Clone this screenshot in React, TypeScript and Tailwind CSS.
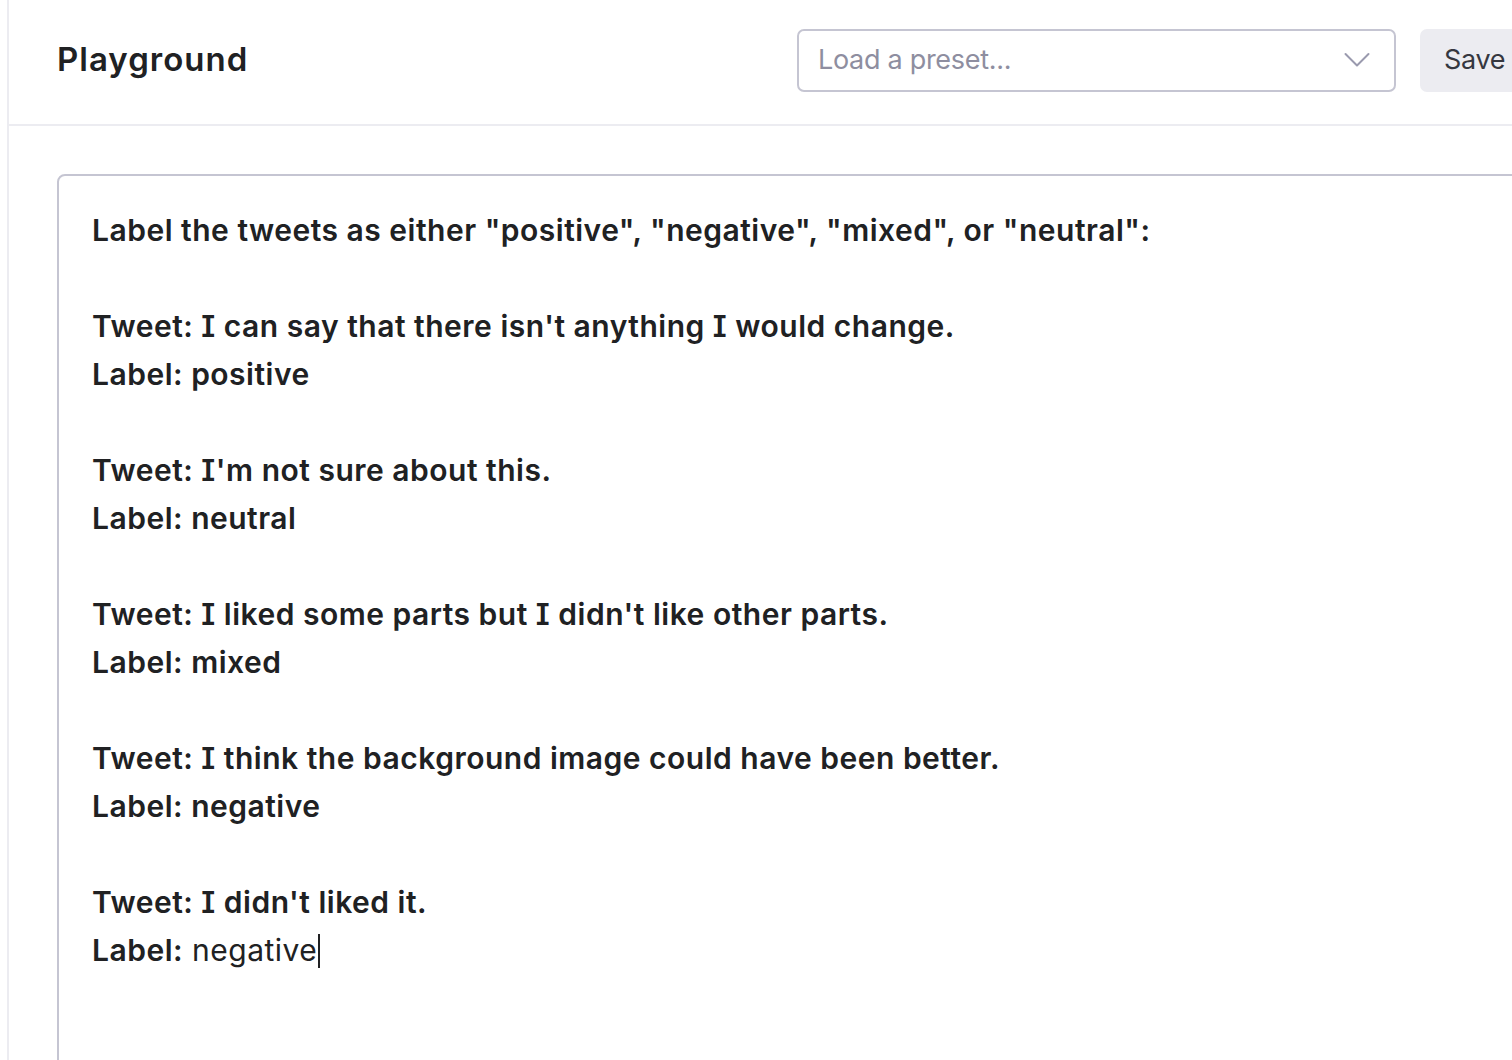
import React from "react";

const lines: { b: string; r?: string; caret?: boolean }[] = [
  { b: 'Label the tweets as either "positive", "negative", "mixed", or "neutral":' },
  { b: "" },
  { b: "Tweet: I can say that there isn't anything I would change." },
  { b: "Label: positive" },
  { b: "" },
  { b: "Tweet: I'm not sure about this." },
  { b: "Label: neutral" },
  { b: "" },
  { b: "Tweet: I liked some parts but I didn't like other parts." },
  { b: "Label: mixed" },
  { b: "" },
  { b: "Tweet: I think the background image could have been better." },
  { b: "Label: negative" },
  { b: "" },
  { b: "Tweet: I didn't liked it." },
  { b: "Label:", r: " negative", caret: true },
];

export default function App() {
  return (
    <div
      className="flex h-[1060px] w-[1512px] overflow-hidden bg-white text-[#202123] [font-feature-settings:'cv08']"
      style={{ fontFamily: "Inter, 'Noto Sans', sans-serif" }}
    >
      <div className="w-[9px] shrink-0 border-r-2 border-[#ececf1]" />
      <div className="flex min-w-0 flex-1 flex-col">
        <header className="flex h-[126px] shrink-0 items-center border-b-2 border-[#ececf1] pb-[4px] pl-[48px]">
          <div className="w-[740px] shrink-0">
            <h1 className="text-[33px] font-semibold tracking-[1px] text-[#202123]">Playground</h1>
          </div>
          <div className="flex h-[63px] w-[599px] shrink-0 items-center justify-between rounded-[7px] border-2 border-[#c5c5d2] pl-[19px] pr-[24px]">
            <span className="text-[27px] text-[#8e8ea0] tracking-[-0.3px]">Load a preset...</span>
            <svg width="26" height="16" viewBox="0 0 26 16" fill="none">
              <path d="M1.5 2 L13 13.5 L24.5 2" stroke="#9a9aae" strokeWidth="2" strokeLinecap="round" strokeLinejoin="round" />
            </svg>
          </div>
          <div className="ml-[24px] flex h-[63px] w-[120px] shrink-0 items-center rounded-[7px] bg-[#ececf1] pl-[24px]">
            <span className="text-[27px] text-[#353740] tracking-[-0.3px]">Save</span>
          </div>
        </header>
        <div className="pl-[48px] pt-[48px]">
          <div className="h-[1000px] w-[1500px] rounded-[8px] border-2 border-[#c5c5d2] pl-[33px] pt-[30px]">
            {lines.map((l, i) => (
              <div key={i} className="h-[48px] whitespace-pre text-[30px] font-semibold leading-[48px] tracking-[0.5px]">
                {l.b}
                {l.r && <span className="font-normal">{l.r}</span>}
                {l.caret && <span className="ml-[1px] inline-block h-[34px] w-[2px] bg-[#202123] align-[-7px]" />}
              </div>
            ))}
          </div>
        </div>
      </div>
    </div>
  );
}
